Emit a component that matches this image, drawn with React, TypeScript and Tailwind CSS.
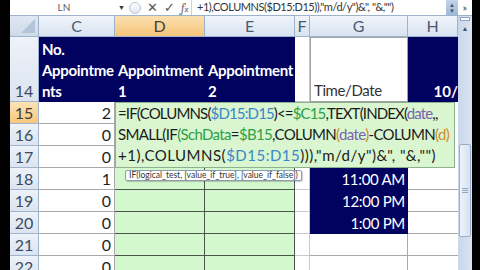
import React from "react";

const FONT = { fontFamily: "Lato, 'Liberation Sans', sans-serif" };

type Seg = [string, string?];

const BLUE = "text-[#3a86c8]";
const GREEN = "text-[#2f9e44]";
const PURPLE = "text-[#7a62ad]";
const ORANGE = "text-[#cf8a2a]";

const formulaLines: { track: string; segs: Seg[] }[] = [
  {
    track: "tracking-[-0.85px]",
    segs: [["=IF(COLUMNS("], ["$D15:D15", BLUE], [")<="], ["$C15", GREEN], [",TEXT(INDEX("], ["date", PURPLE], [",,"]],
  },
  {
    track: "tracking-[-0.65px]",
    segs: [
      ["SMALL(IF"],
      ["(", GREEN],
      ["SchData", GREEN],
      ["="],
      ["$B15", GREEN],
      [",COLUMN"],
      ["(", ORANGE],
      ["date", PURPLE],
      [")", ORANGE],
      ["-COLUMN"],
      ["(d)", ORANGE],
    ],
  },
  {
    track: "tracking-[0.5px]",
    segs: [["+1),COLUMNS("], ["$D15:D15", BLUE], ["))),\"m/d/y\")&\", \"&,\"\")"]],
  },
];

const values = [2, 0, 0, 1, 0, 0, 0, 0];
const times: Record<number, string> = { 18: "11:00 AM", 19: "12:00 PM", 20: "1:00 PM" };

function RowHeader({ n, active }: { n: number; active?: boolean }) {
  return (
    <div
      className={`flex items-end justify-center border-b border-r border-[#9eb4cd] text-[16px] leading-[21px] ${
        active
          ? "bg-gradient-to-b from-[#fbe3b6] to-[#f6c87c] text-[#3d3a33]"
          : "bg-gradient-to-b from-[#eef2f9] to-[#dbe4f0] text-[#3b4a62]"
      }`}
    >
      {n}
    </div>
  );
}

function ColHeader({ label, active }: { label: string; active?: boolean }) {
  return (
    <div
      className={`flex items-center justify-center border-b border-r border-[#9eb4cd] text-[16px] ${
        active
          ? "bg-gradient-to-b from-[#fbe0b0] to-[#f5c47a] text-[#46413a]"
          : "bg-gradient-to-b from-[#f1f5fb] to-[#d8e2ef] text-[#4b5a73]"
      }`}
    >
      {label}
    </div>
  );
}

function ValueCell({ v }: { v: number }) {
  return (
    <div className="flex items-center justify-end border-b border-r border-[#a9a9a9] bg-white pr-[3px] text-[16px] text-[#1e1e1e]">
      {v}
    </div>
  );
}

export default function App() {
  return (
    <div className="flex h-[270px] w-[480px] overflow-hidden bg-black" style={FONT}>
      <div className="w-[10px] shrink-0 bg-black" />
      <div className="flex w-[462px] shrink-0 flex-col">
        {/* Formula bar */}
        <div className="flex h-[16px] shrink-0 items-center border-b border-[#9db3cc] bg-white">
          <div className="flex w-[108px] justify-center text-[10px] text-[#5a5a5a]">LN</div>
          <span className="w-[10px] text-[7px] text-[#333]">▼</span>
          <div className="flex w-[63px] items-center gap-[6px] pl-[1px]">
            <span className="h-[12px] w-[12px] rounded-full border border-[#b8c6d8] bg-gradient-to-b from-white to-[#dfe7f1]" />
            <span className="text-[13px] leading-none text-[#555]">✕</span>
            <span className="text-[13px] leading-none text-[#555]">✓</span>
            <span className="font-serif text-[12px] italic leading-none text-[#666]">
              f<span className="text-[9px]">x</span>
            </span>
          </div>
          <div className="flex h-full flex-1 items-center border-l border-[#c8d3e2] pl-[5px] text-[11px] tracking-[-0.45px] text-[#333]">
            +1),COLUMNS($D15:D15)),"m/d/y")&amp;", "&amp;,"")
          </div>
          <div className="flex h-full w-[12px] flex-col items-center justify-center bg-gradient-to-b from-[#c3d3e7] to-[#9fb7d6] text-[6px] leading-[6px] text-[#3d5472]">
            <span>▲</span>
            <span>▼</span>
          </div>
          <div className="flex h-full w-[14px] items-center justify-center bg-white text-[10px] text-[#333]">»</div>
        </div>

        <div className="flex flex-1">
          <div className="grid w-[448px] grid-cols-[29px_76px_90px_90px_15px_98px_50px] grid-rows-[21px_65px_repeat(8,22px)] bg-white">
            {/* header row */}
            <div className="relative border-b border-r border-[#9eb4cd] bg-gradient-to-b from-[#dfe7f2] to-[#cfdaea]">
              <div className="absolute bottom-[3px] right-[3px] h-0 w-0 border-b-[14px] border-l-[14px] border-b-[#b4c4d9] border-l-transparent" />
            </div>
            <ColHeader label="C" />
            <ColHeader label="D" active />
            <ColHeader label="E" />
            <ColHeader label="F" />
            <ColHeader label="G" />
            <ColHeader label="H" />

            {/* row 14 */}
            <RowHeader n={14} />
            <div className="flex flex-col justify-end bg-[#01015f] pl-[3px] text-[15px] font-bold leading-[21px] tracking-[-0.3px] text-white">
              <span>No.</span>
              <span>Appointme</span>
              <span>nts</span>
            </div>
            <div className="flex flex-col justify-end bg-[#01015f] pl-[3px] text-[15px] font-bold leading-[21px] tracking-[-0.3px] text-white">
              <span>Appointment</span>
              <span>1</span>
            </div>
            <div className="flex flex-col justify-end bg-[#01015f] pl-[3px] text-[15px] font-bold leading-[21px] tracking-[-0.3px] text-white">
              <span>Appointment</span>
              <span>2</span>
            </div>
            <div className="border-b border-r border-[#c8c8c8] bg-white" />
            <div className="flex items-end border border-[#a0a0a0] bg-white pl-[3px] text-[15px] leading-[21px] tracking-[-0.4px] text-[#333]">
              Time/Date
            </div>
            <div className="flex items-end justify-end overflow-hidden bg-[#01015f] text-[15px] font-bold leading-[21px] text-white">
              10/
            </div>

            {/* formula edit overlay D15:H17 */}
            <div className="col-start-3 col-end-8 row-start-3 row-end-6 mr-[3px] border border-[#8fb08f] bg-[#d9f6d0] pl-[2px] text-[15px] leading-[21px] text-[#1b1b1b]">
              {formulaLines.map((line, i) => (
                <div key={i} className={`whitespace-nowrap ${line.track}`}>
                  {line.segs.map(([t, c], j) => (
                    <span key={j} className={c}>
                      {t}
                    </span>
                  ))}
                </div>
              ))}
            </div>

            {values.map((v, i) => {
              const r = 15 + i;
              if (r <= 17) {
                return (
                  <React.Fragment key={r}>
                    <RowHeader n={r} active={r === 15} />
                    <ValueCell v={v} />
                  </React.Fragment>
                );
              }
              return (
                <React.Fragment key={r}>
                  <RowHeader n={r} />
                  <ValueCell v={v} />
                  <div className="border-b border-r border-[#4a564a] bg-[#d3f8cd]" />
                  <div className="border-b border-r border-[#4a564a] bg-[#d3f8cd]" />
                  <div className="border-b border-r border-[#c8c8c8] bg-white" />
                  {times[r] ? (
                    <div className="flex items-center justify-end bg-[#01015f] pr-[3px] text-[15px] tracking-[-0.3px] text-white">
                      {times[r]}
                    </div>
                  ) : (
                    <div className="border-b border-r border-[#a9a9a9] bg-white" />
                  )}
                  <div className="border-b border-[#a9a9a9] bg-white" />
                </React.Fragment>
              );
            })}
          </div>

          {/* vertical scrollbar */}
          <div className="relative flex w-[14px] flex-col items-center bg-gradient-to-r from-[#c9d7ea] to-[#dbe5f2]">
            <div className="mt-[1px] h-[4px] w-[10px] border border-[#8ea6c4] bg-white" />
            <div className="mt-[4px] text-[7px] leading-none text-[#3d5472]">▲</div>
            <div className="absolute top-[128px] flex h-[93px] w-[12px] flex-col items-center justify-center rounded-[2px] border border-[#97aecb] bg-gradient-to-r from-[#eef3fa] to-[#d6e2f1]">
              <div className="h-[1px] w-[6px] bg-[#8ea6c4]" />
              <div className="mt-[1px] h-[1px] w-[6px] bg-[#8ea6c4]" />
              <div className="mt-[1px] h-[1px] w-[6px] bg-[#8ea6c4]" />
            </div>
          </div>
        </div>
      </div>
      <div className="w-[8px] shrink-0 bg-black" />

      {/* function tooltip */}
      <div
        className="pointer-events-none absolute left-[125px] top-[170px] whitespace-nowrap rounded-[2px] border border-[#8f9bb0] bg-white px-[3px] text-[8.5px] leading-[9px] text-[#333] shadow-[1px_1px_1px_rgba(0,0,0,0.2)]"
        style={FONT}
      >
        IF(logical_test, [value_if_true], [value_if_false])
      </div>
    </div>
  );
}
